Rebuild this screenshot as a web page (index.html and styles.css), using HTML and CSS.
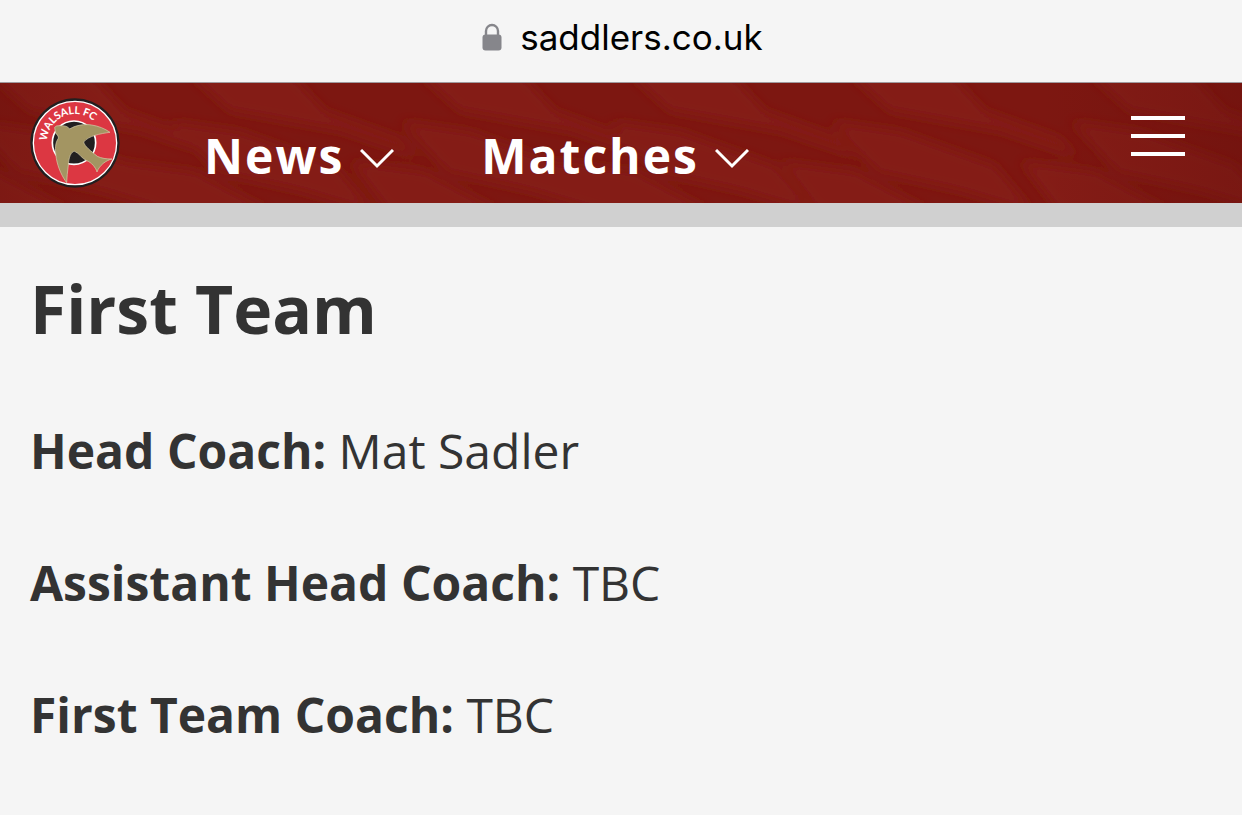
FILE: index.html
```html
<!DOCTYPE html>
<html lang="en">
<head>
<meta charset="utf-8">
<meta name="viewport" content="width=device-width, initial-scale=1">
<title>First Team</title>
<link rel="stylesheet" href="styles.css">
</head>
<body>
<div class="address-bar">
  <svg class="lock" viewBox="0 0 20 28" aria-hidden="true">
    <path d="M4 13V8a6 6 0 0 1 12 0v5" fill="none" stroke="#86868b" stroke-width="2.4"/>
    <rect x="0.5" y="11.5" width="19" height="16" rx="3" fill="#86868b"/>
  </svg>
  <span class="domain">saddlers.co.uk</span>
</div>
<header class="site-header">
  <svg class="texture" viewBox="0 0 1242 120" preserveAspectRatio="none" aria-hidden="true">
    <defs>
      <filter id="soft" x="-10%" y="-10%" width="120%" height="120%"><feGaussianBlur stdDeviation="6"/></filter>
      <linearGradient id="edge"><stop offset="0" stop-color="#600d0a" stop-opacity=".2"/><stop offset=".08" stop-color="#600d0a" stop-opacity="0"/><stop offset=".84" stop-color="#600d0a" stop-opacity="0"/><stop offset="1" stop-color="#600d0a" stop-opacity=".3"/></linearGradient>
      <g id="folds">
        <path d="M18 -10 L120 -10 L155 28 L230 55 L250 75 L170 48 L60 28Z"/>
        <path d="M0 38 L70 48 L165 82 L205 130 L130 108 L48 90Z"/>
        <path d="M-50 78 L25 88 L105 130 L-10 130Z"/>
      </g>
    </defs>
    <g fill="#841b16" filter="url(#soft)">
      <use href="#folds" x="-30"/><use href="#folds" x="170"/><use href="#folds" x="400"/><use href="#folds" x="610"/><use href="#folds" x="830"/><use href="#folds" x="1070"/>
    </g>
    <rect width="1242" height="120" fill="url(#edge)"/>
  </svg>
  <a class="crest-link" href="#" aria-label="Walsall FC home">
    <svg class="crest" viewBox="30 24 270 270">
      <defs><path id="motto" d="M81 153 A84 84 0 0 1 249 159"/></defs>
      <circle cx="165" cy="159" r="134" fill="#211f20"/>
      <circle cx="165" cy="159" r="125" fill="#dc3742" stroke="#fff" stroke-width="4"/>
      <circle cx="162" cy="158" r="65" fill="#211f20" stroke="#fff" stroke-width="5"/>
      <text class="crest-text"><textPath href="#motto">WALSALL FC</textPath></text>
      <path fill="#a39562" stroke="#d8cfae" stroke-width="2" stroke-linejoin="round" d="M104 112 Q108 106 120 107 Q142 106 149 117 C170 104 195 102 215 105 C235 108 255 116 270 127 C240 131 205 138 191 156 C194 170 212 182 232 199 C245 205 258 207 276 207 C258 211 238 226 231 246 C227 232 214 217 200 212 C185 205 178 190 164 184 C152 184 146 205 145 225 Q141 255 140 278 C128 262 114 235 109 205 C106 185 104 165 112 150 Q118 144 114 138 Q104 130 104 112Z"/>
    </svg>
  </a>
  <nav class="nav">
    <button class="nav-item" type="button">News
      <svg class="chevron" viewBox="0 0 34 20" aria-hidden="true"><path d="M1 1 17 17 33 1"/></svg>
    </button>
    <button class="nav-item" type="button">Matches
      <svg class="chevron" viewBox="0 0 34 20" aria-hidden="true"><path d="M1 1 17 17 33 1"/></svg>
    </button>
  </nav>
  <button class="menu" type="button" aria-label="Open menu"><span class="bar"></span><span class="bar"></span><span class="bar"></span></button>
</header>
<main class="content">
  <h1 class="title">First Team</h1>
  <p class="role"><strong>Head Coach:</strong> Mat Sadler</p>
  <p class="role"><strong>Assistant Head Coach:</strong> TBC</p>
  <p class="role"><strong>First Team Coach:</strong> TBC</p>
</main>
</body>
</html>
```
FILE: styles.css
```css
* { box-sizing: border-box; }
body {
  margin: 0;
  background: #f5f5f5;
  color: #333;
  font-family: "Open Sans", "Noto Sans", sans-serif;
}
.address-bar {
  display: flex;
  align-items: center;
  justify-content: center;
  gap: 18px;
  height: 83px;
  padding: 0 0 8px 3px;
  border-bottom: 1px solid #a09a9e;
  color: #000;
  font: 35px "Inter", sans-serif;
}
.lock { width: 20px; height: 28px; }
.site-header {
  position: relative;
  display: flex;
  align-items: flex-start;
  height: 144px;
  padding: 15px 57px 0 30px;
  border-bottom: 24px solid #d0d0d0;
  background: #7d1711;
}
.texture { position: absolute; inset: 0; width: 100%; height: 100%; }
.crest-link, .nav, .menu { position: relative; }
.crest-link, .crest { display: block; width: 90px; height: 90px; }
.crest-text { fill: #fff; font: bold 32px "Lato", sans-serif; }
.nav { display: flex; gap: 87px; margin-left: 84px; padding-top: 25px; }
.nav-item {
  display: flex;
  align-items: center;
  gap: 16px;
  padding: 0;
  border: 0;
  background: none;
  color: #fff;
  font: bold 48px/66px "Open Sans", "Noto Sans", sans-serif;
  letter-spacing: 2px;
}
.chevron { width: 34px; height: 20px; margin-top: 6px; fill: none; stroke: #fff; stroke-width: 3; }
.menu {
  display: flex;
  flex-direction: column;
  gap: 14px;
  width: 54px;
  margin: 18px 0 0 auto;
  padding: 0;
  border: 0;
  background: none;
}
.bar { width: 100%; height: 4px; background: #fff; }
.content { padding: 36px 30px; }
.title { margin: 0 0 62px; font-size: 66px; line-height: 90px; }
.role { margin: 0 0 60px; font-size: 48px; line-height: 72px; }
```
